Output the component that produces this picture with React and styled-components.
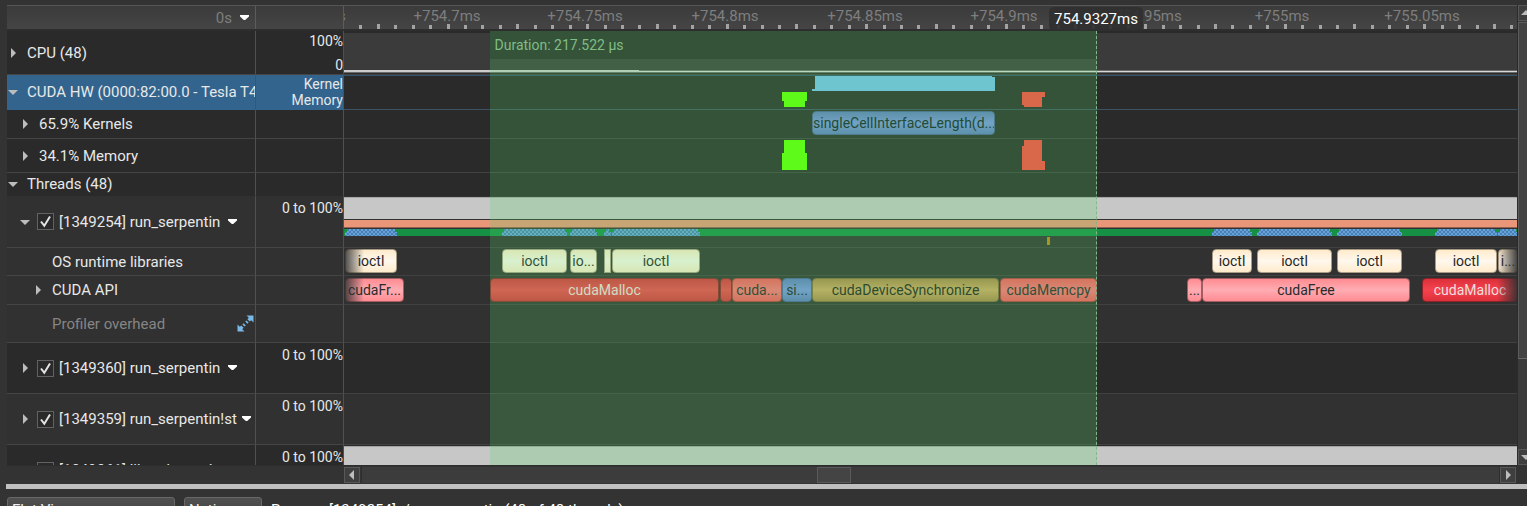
import React from "react";
import styled, { createGlobalStyle, css } from "styled-components";

const GlobalStyle = createGlobalStyle`
  * { box-sizing: border-box; }
  body {
    margin: 0;
    background: #333333;
    color: #e8e8e8;
    font: 15px/18px Roboto, "Liberation Sans", sans-serif;
    overflow: hidden;
  }
`;

/* The visible time range is divided into 1173 units. */
const RANGE = 1173;
const pct = (units) => `${(units / RANGE) * 100}%`;

const Page = styled.div`
  display: flex;
  flex-direction: column;
  height: 100vh;
  padding-top: 5px;
  overflow: hidden;
`;

const Viewer = styled.main`
  display: flex;
  flex: 1 1 0;
  min-height: 0;
  padding-left: 7px;
`;

const Sheet = styled.div`
  display: flex;
  flex-direction: column;
  flex: 1;
  min-width: 0;
`;

const Rows = styled.div`
  position: relative;
  flex: 1 1 0;
  min-height: 0;
  overflow: hidden;
`;

const columns = css`
  display: grid;
  grid-template-columns: 249px 88px minmax(0, 1fr);
`;

const Header = styled.div`
  ${columns}
  position: relative;
  height: 26px;
  background: linear-gradient(#3b3b3b, #454545);
  border-top: 1px solid #565656;
  border-bottom: 2px solid #2e2e2e;
`;

const HeaderCell = styled.div`
  display: flex;
  align-items: center;
  justify-content: flex-end;
  border-right: 1px solid #5c5c5c;
  color: #7e7e7e;
`;

const Origin = styled.button`
  display: flex;
  align-items: center;
  gap: 8px;
  padding: 0 6px 0 0;
  border: 0;
  background: none;
  color: inherit;
  font: inherit;
`;

const Ruler = styled.div`
  position: relative;
  overflow: hidden;
  color: #7e7e7e;
`;

const RulerLabel = styled.span`
  position: absolute;
  top: 1px;
  transform: translateX(-50%);
  white-space: nowrap;
`;

const Tick = styled.i`
  position: absolute;
  bottom: 0;
  width: 3px;
  height: ${(p) => (p.$major ? 5 : 4)}px;
  margin-left: -1px;
  background: #a3a3a3;
`;

const CursorLayer = styled.div`
  position: absolute;
  inset: 0 0 0 337px;
  pointer-events: none;
`;

const CursorTime = styled.output`
  position: absolute;
  top: 1px;
  transform: translateX(-50%);
  padding: 3px 5px;
  border-radius: 5px;
  background: rgba(48, 48, 48, 0.92);
  color: #ffffff;
  z-index: 3;
`;

const Row = styled.div`
  ${columns}
  height: ${(p) => p.$height}px;
  background: ${(p) => (p.$light ? "#313131" : "#2a2a2a")};
`;

const NameCell = styled.div`
  display: flex;
  align-items: center;
  padding-left: ${(p) => p.$indent || 0}px;
  overflow: hidden;
  white-space: nowrap;
  background: ${(p) => (p.$selected ? "#32648e" : "transparent")};
  border-right: 1px solid #505050;
  border-bottom: 1px solid ${(p) => (p.$line ? "#454545" : "transparent")};
  color: ${(p) => (p.$muted ? "#858585" : "#e8e8e8")};
`;

const ValueCell = styled.div`
  display: flex;
  flex-direction: column;
  justify-content: ${(p) => (p.$spread ? "space-between" : "flex-start")};
  padding-top: ${(p) => p.$top || 0}px;
  padding-bottom: ${(p) => (p.$spread ? 1 : 0)}px;
  overflow: hidden;
  text-align: right;
  font-size: 14px;
  line-height: 16px;
  background: ${(p) => (p.$selected ? "#32648e" : "transparent")};
  border-right: 1px solid #505050;
  border-bottom: 1px solid ${(p) => (p.$line ? "#454545" : "transparent")};
`;

const Track = styled.div`
  position: relative;
  overflow: hidden;
  border-top: ${(p) => (p.$selected ? "1px solid #33536c" : "0")};
  border-bottom: 1px solid ${(p) => (p.$selected ? "#3d5262" : p.$line ? "#414141" : "transparent")};
`;

const Toggle = styled.button`
  display: grid;
  place-items: center;
  flex: none;
  width: 12px;
  height: 18px;
  margin-right: ${(p) => p.$gap || 8}px;
  padding: 0;
  border: 0;
  background: none;
`;

const CheckBox = styled.span`
  display: grid;
  flex: none;
  width: 17px;
  height: 17px;
  margin-right: 5px;
  input, svg { grid-area: 1 / 1; width: 17px; height: 17px; margin: 0; }
  input { appearance: none; border: 1px solid #626262; background: #2a2a2a; }
  svg { pointer-events: none; }
`;

const PlainButton = styled.button`
  display: grid;
  place-items: center;
  width: ${(p) => p.$size}px;
  height: 18px;
  margin-left: ${(p) => p.$gap}px;
  padding: 0;
  border: 0;
  background: none;
`;

const Lane = styled.div`
  position: relative;
  height: ${(p) => p.$height}px;
  margin-top: ${(p) => p.$gap || 0}px;
`;

const UsageBar = styled(Lane)`
  background: #c7c7c7;
  border-top: 1px solid #a5a5a5;
`;

const StateBar = styled(Lane)`
  background: #ea9679;
  border-bottom: 1px solid #925f50;
`;

const ActivityBar = styled(Lane)`
  background: #169045;
`;

const Blocked = styled.i`
  position: absolute;
  top: 0;
  height: 7px;
  background: repeating-conic-gradient(#4a7fb0 0 25%, #65a3de 0 50%) 0 0 / 4px 4px;
  clip-path: polygon(2px 0, calc(100% - 2px) 0, calc(100% - 2px) 3px, 100% 3px, 100% 100%, 0 100%, 0 3px, 2px 3px);
`;

const Mark = styled.i`
  position: absolute;
  top: 0;
  height: 100%;
  z-index: 2;
  background: ${(p) => p.$color};
  clip-path: ${(p) => p.$shape || "none"};
`;

const CpuLoad = styled.div`
  height: 100%;
  padding-top: 2px;
  svg { display: block; width: 100%; height: 41px; background: #3b3b3b; }
`;

const palette = {
  ioctl: ["#ffebcb", "#fff8ee", "#a89a84", "#262626"],
  free: ["#ff8c92", "#ffacb3", "#a35d62", "#2b2b2b"],
  malloc: ["#dd303b", "#f4434e", "#8c2329", "#f2dede"],
  copy: ["#fb555c", "#ff727a", "#b53b40", "#26262a"],
  kernel: ["#5f7ac0", "#7a92e2", "#4c60a0", "#202020"],
  sync: ["#ac8549", "#d1a663", "#84693c", "#202020"],
  gpu: ["#5f7bbd", "#7a92e2", "#4c6098", "#102024"],
};

const Event = styled.div`
  position: absolute;
  top: 0;
  height: 24px;
  overflow: hidden;
  border: 1px solid ${(p) => palette[p.$kind][2]};
  border-radius: ${(p) => (p.$sliver ? 0 : 4)}px;
  background: linear-gradient(
    ${(p) => palette[p.$kind][0]},
    ${(p) => palette[p.$kind][1]} 50%,
    ${(p) => palette[p.$kind][0]}
  );
  color: ${(p) => palette[p.$kind][3]};
  font-size: 14px;
  line-height: 22px;
  text-align: center;
  white-space: nowrap;
`;

const EdgeFade = styled.i`
  position: absolute;
  top: 0;
  bottom: 0;
  width: 20px;
  ${(p) => (p.$right ? "right: 0" : "left: 0")};
  background: linear-gradient(
    ${(p) => (p.$right ? "to left" : "to right")},
    rgba(49, 49, 49, 0.9),
    rgba(49, 49, 49, 0)
  );
`;

const Overlay = styled.div`
  position: absolute;
  inset: 0 0 0 337px;
  pointer-events: none;
`;

const Selection = styled.div`
  position: absolute;
  top: 0;
  bottom: 0;
  background: rgba(89, 216, 106, 0.235);
  border-right: 1px dashed #86b58b;
  z-index: 1;
`;

const DurationLabel = styled.div`
  height: 28px;
  padding: 5px 5px 0;
  background: #355339;
  color: #7fbd86;
  font-size: 14px;
`;

const HScroll = styled.div`
  display: grid;
  grid-template-columns: 337px 17px minmax(0, 1fr) 17px;
  height: 18px;
  padding-top: 1px;
  border-top: 1px solid #2d2d2d;
  flex: none;
`;

const HGroove = styled.div`
  grid-column: 3;
  background: #3c3c3c;
  border: solid #2e2e2e;
  border-width: 0 1px;
`;

const ScrollButton = styled.button`
  display: grid;
  place-items: center;
  flex: none;
  grid-column: ${(p) => p.$column || "auto"};
  width: 16px;
  height: 16px;
  padding: 0;
  border: 1px solid #585858;
  background: #3f3f3f;
`;

const HThumb = styled.div`
  width: 3%;
  height: 16px;
  margin-left: 40%;
  background: #444444;
  border: 1px solid #5a5a5a;
`;

const VScroll = styled.div`
  display: flex;
  flex-direction: column;
  width: 10px;
  margin-bottom: 18px;
  overflow: hidden;
  border-left: 1px solid #2b2b2b;
`;

const VGroove = styled.div`
  flex: 1;
  width: 16px;
  padding-top: 1px;
  background: #3b3b3b;
`;

const VThumb = styled.div`
  height: 79%;
  background: #434343;
  border: 1px solid #5c5c5c;
  border-bottom-color: #6a6a6a;
`;

const Splitter = styled.hr`
  flex: none;
  align-self: stretch;
  height: 5px;
  margin: 1px 0 0 6px;
  border: 0;
  background: #c0c0c0;
`;

const BottomPanel = styled.footer`
  display: flex;
  align-items: flex-start;
  gap: 9px;
  flex: none;
  height: 17px;
  padding: 8px 7px 0;
  overflow: hidden;
`;

const BottomSelect = styled.select`
  appearance: none;
  width: ${(p) => p.$width}px;
  height: 26px;
  padding: 0 4px;
  border: 1px solid #686868;
  border-radius: 3px;
  background: linear-gradient(#505050, #404040);
  color: #f0f0f0;
  font: inherit;
`;

const BottomText = styled.span`
  padding-top: 4px;
  color: #ffffff;
`;

const Arrow = ({ dir, fill = "#bdbdbd", size = 10 }) => {
  const d = {
    right: "M3 0L8 5L3 10Z",
    left: "M7 0L2 5L7 10Z",
    down: "M0 3H10L5 8Z",
    up: "M0 7H10L5 2Z",
  }[dir];
  return (
    <svg width={size} height={size} viewBox="0 0 10 10" aria-hidden="true">
      <path d={d} fill={fill} />
    </svg>
  );
};

const MenuArrow = () => (
  <svg width="9" height="6" viewBox="0 0 9 6" aria-hidden="true">
    <path d="M0 0H9V1.5L5.2 5H3.8L0 1.5Z" fill="#ffffff" />
  </svg>
);

const Expand = () => (
  <svg width="17" height="17" viewBox="0 0 17 17" fill="#7ab8e6" aria-hidden="true">
    <path d="M9.5 0.5H16.5V7.5L14.2 5.2L12.8 6.6L10.4 4.2L11.8 2.8Z" />
    <path d="M9.4 5.4L11.6 7.6L10.4 8.8L8.2 6.6Z" />
    <path d="M0.5 9.5L2.8 11.8L4.2 10.4L6.6 12.8L5.2 14.2L7.5 16.5H0.5Z" />
    <path d="M5.4 9.4L6.6 8.2L8.8 10.4L7.6 11.6Z" />
  </svg>
);

const Check = ({ label }) => (
  <CheckBox>
    <input type="checkbox" defaultChecked aria-label={label} />
    <svg viewBox="0 0 17 17" aria-hidden="true">
      <path d="M4 8.5L7.3 12.8L13 3.5" fill="none" stroke="#e4e4e4" strokeWidth="2" />
    </svg>
  </CheckBox>
);

const at = (start, end) => ({ left: pct(start), width: pct(end - start) });

const rulerLabels = [
  [-36, "+754.65ms"],
  [103, "+754.7ms"],
  [241, "+754.75ms"],
  [381, "+754.8ms"],
  [521, "+754.85ms"],
  [660, "+754.9ms"],
  [800, "+754.95ms"],
  [938, "+755ms"],
  [1078, "+755.05ms"],
];
const ticks = Array.from({ length: 67 }, (_, i) => ({
  pos: 16.4 + i * 17.44,
  major: i % 4 === 1,
}));

const osEvents = [
  [1, 53, "ioctl"],
  [158, 223, "ioctl"],
  [226, 253, "io..."],
  [260, 267, ""],
  [268, 356, "ioctl"],
  [868, 908, "ioctl"],
  [913, 988, "ioctl"],
  [993, 1058, "ioctl"],
  [1091, 1153, "ioctl"],
  [1154, 1174, "i..."],
];

const apiEvents = [
  [1, 60, "cudaFr...", "free"],
  [146, 375, "cudaMalloc", "malloc"],
  [376, 388, "", "malloc"],
  [388, 438, "cuda...", "copy"],
  [438, 468, "si...", "kernel"],
  [468, 655, "cudaDeviceSynchronize", "sync"],
  [656, 753, "cudaMemcpy", "copy"],
  [843, 858, "...", "free"],
  [858, 1066, "cudaFree", "free"],
  [1078, 1174, "cudaMalloc", "malloc"],
];

const CYAN = "#6ec4cf";
const GREEN = "#5efa1a";
const RED = "#d9674a";

function ThreadName({ id, name, open }) {
  return (
    <NameCell $indent={12} $line>
      <Toggle aria-label={`Toggle ${id}`} $gap={6}>
        <Arrow dir={open ? "down" : "right"} />
      </Toggle>
      <Check label={`[${id}] ${name}`} />
      <span>{`[${id}] ${name}`}</span>
      <PlainButton $size={9} $gap={name.includes("!") ? 5 : 8} aria-label="Thread menu">
        <MenuArrow />
      </PlainButton>
    </NameCell>
  );
}

export default function App() {
  return (
    <>
      <GlobalStyle />
      <Page>
        <Viewer>
          <Sheet>
            <Header>
              <HeaderCell>
                <Origin>
                  0s <MenuArrow />
                </Origin>
              </HeaderCell>
              <HeaderCell />
              <Ruler>
                {rulerLabels.map(([pos, text]) => (
                  <RulerLabel key={text} style={{ left: pct(pos) }}>{text}</RulerLabel>
                ))}
                {ticks.map((t) => (
                  <Tick key={t.pos} $major={t.major} style={{ left: pct(t.pos) }} />
                ))}
              </Ruler>
              <CursorLayer>
                <CursorTime style={{ left: pct(752) }}>754.9327ms</CursorTime>
              </CursorLayer>
            </Header>

            <Rows>
              <Row $height={44}>
                <NameCell $line>
                  <Toggle aria-label="Toggle CPU"><Arrow dir="right" /></Toggle>
                  CPU (48)
                </NameCell>
                <ValueCell $spread $line $top={2}>
                  <span>100%</span>
                  <span>0</span>
                </ValueCell>
                <Track $line>
                  <CpuLoad>
                    <svg viewBox={`0 0 ${RANGE} 41`} preserveAspectRatio="none" role="img" aria-label="CPU load">
                      <rect y="40" width={RANGE} height="1" fill="#2c2c2c" />
                      <rect y="37" width={RANGE} height="1" fill="#6a6a6a" />
                      <rect y="38" width={RANGE} height="1" fill="#d8d8d8" />
                      <rect y="39" width={RANGE} height="1" fill="#6a6a6a" />
                      <rect y="37" width="295" height="2" fill="#cccccc" />
                    </svg>
                  </CpuLoad>
                </Track>
              </Row>

              <Row $height={35}>
                <NameCell $selected>
                  <Toggle aria-label="Toggle CUDA HW"><Arrow dir="down" /></Toggle>
                  CUDA HW (0000:82:00.0 - Tesla T4)
                </NameCell>
                <ValueCell $selected $top={1}>
                  <span>Kernel</span>
                  <span>Memory</span>
                </ValueCell>
                <Track $selected>
                  <Lane $height={15}>
                    <Mark
                      style={at(468, 651)}
                      $color={CYAN}
                      $shape="polygon(3px 0, calc(100% - 3px) 0, calc(100% - 3px) 1px, 100% 1px, 100% 100%, 0 100%, 0 13px, 3px 13px)"
                    />
                  </Lane>
                  <Lane $height={15} $gap={1}>
                    <Mark
                      style={at(438, 463)}
                      $color={GREEN}
                      $shape="polygon(0 0, 100% 0, 100% 9px, calc(100% - 2px) 9px, calc(100% - 2px) 100%, 2px 100%, 2px 9px, 0 9px)"
                    />
                    <Mark
                      style={at(678, 701)}
                      $color={RED}
                      $shape="polygon(0 0, 100% 0, 100% 5px, calc(100% - 3px) 5px, calc(100% - 3px) 100%, 2px 100%, 2px 13px, 0 13px)"
                    />
                  </Lane>
                </Track>
              </Row>

              <Row $height={29}>
                <NameCell $indent={12} $line>
                  <Toggle aria-label="Toggle kernels"><Arrow dir="right" /></Toggle>
                  65.9% Kernels
                </NameCell>
                <ValueCell $line />
                <Track $line>
                  <Lane $height={24} $gap={1}>
                    <Event $kind="gpu" style={at(468, 651)}>singleCellInterfaceLength(d...</Event>
                  </Lane>
                </Track>
              </Row>

              <Row $height={34}>
                <NameCell $indent={12} $line>
                  <Toggle aria-label="Toggle memory"><Arrow dir="right" /></Toggle>
                  34.1% Memory
                </NameCell>
                <ValueCell $line />
                <Track $line>
                  <Lane $height={30} $gap={1}>
                    <Mark
                      style={at(438, 463)}
                      $color={GREEN}
                      $shape="polygon(2px 0, calc(100% - 2px) 0, calc(100% - 2px) 13px, 100% 13px, 100% 100%, 0 100%, 0 13px, 2px 13px)"
                    />
                    <Mark
                      style={at(678, 701)}
                      $color={RED}
                      $shape="polygon(2px 0, calc(100% - 3px) 0, calc(100% - 3px) 21px, 100% 21px, 100% 100%, 0 100%, 0 6px, 2px 6px)"
                    />
                  </Lane>
                </Track>
              </Row>

              <Row $height={23}>
                <NameCell>
                  <Toggle aria-label="Toggle threads"><Arrow dir="down" /></Toggle>
                  Threads (48)
                </NameCell>
                <ValueCell />
                <Track />
              </Row>

              <Row $height={52} $light>
                <ThreadName id="1349254" name="run_serpentin" open />
                <ValueCell $line $top={4}>0 to 100%</ValueCell>
                <Track $line>
                  <UsageBar $height={22} $gap={1} />
                  <StateBar $height={8} $gap={1} />
                  <ActivityBar $height={7} $gap={1}>
                    {osEvents.map(([s, e]) => (
                      <Blocked key={s} style={at(s, e)} />
                    ))}
                  </ActivityBar>
                  <Lane $height={8} $gap={1}>
                    <Mark style={at(703, 706)} $color="#a6981c" />
                  </Lane>
                </Track>
              </Row>

              <Row $height={28} $light>
                <NameCell $indent={45} $line>OS runtime libraries</NameCell>
                <ValueCell $line />
                <Track $line>
                  <Lane $height={24} $gap={1}>
                    {osEvents.map(([s, e, text]) => (
                      <Event key={s} $kind="ioctl" $sliver={!text} style={at(s, e)}>{text}</Event>
                    ))}
                  </Lane>
                  <EdgeFade />
                  <EdgeFade $right />
                </Track>
              </Row>

              <Row $height={29} $light>
                <NameCell $indent={25} $line>
                  <Toggle aria-label="Toggle CUDA API"><Arrow dir="right" /></Toggle>
                  CUDA API
                </NameCell>
                <ValueCell $line />
                <Track $line>
                  <Lane $height={24} $gap={2}>
                    {apiEvents.map(([s, e, text, kind]) => (
                      <Event key={s} $kind={kind} style={at(s, e)}>{text}</Event>
                    ))}
                  </Lane>
                  <EdgeFade />
                  <EdgeFade $right />
                </Track>
              </Row>

              <Row $height={38} $light>
                <NameCell $indent={45} $muted $line>
                  Profiler overhead
                  <PlainButton $size={17} $gap={72} aria-label="Expand row"><Expand /></PlainButton>
                </NameCell>
                <ValueCell $line />
                <Track $line />
              </Row>

              <Row $height={51}>
                <ThreadName id="1349360" name="run_serpentin" />
                <ValueCell $line $top={4}>0 to 100%</ValueCell>
                <Track $line />
              </Row>

              <Row $height={51} $light>
                <ThreadName id="1349359" name="run_serpentin!st" />
                <ValueCell $line $top={4}>0 to 100%</ValueCell>
                <Track $line />
              </Row>

              <Row $height={51}>
                <ThreadName id="1349361" name="libcudart.so!st" />
                <ValueCell $line $top={4}>0 to 100%</ValueCell>
                <Track $line>
                  <UsageBar $height={22} $gap={1} />
                </Track>
              </Row>

              <Overlay>
                <Selection style={at(145.5, 752.5)}>
                  <DurationLabel>Duration: 217.522 µs</DurationLabel>
                </Selection>
              </Overlay>
            </Rows>

            <HScroll>
              <ScrollButton $column={2} aria-label="Scroll left"><Arrow dir="left" /></ScrollButton>
              <HGroove>
                <HThumb />
              </HGroove>
              <ScrollButton $column={4} aria-label="Scroll right"><Arrow dir="right" /></ScrollButton>
            </HScroll>
          </Sheet>

          <VScroll>
            <ScrollButton aria-label="Scroll up"><Arrow dir="up" /></ScrollButton>
            <VGroove><VThumb /></VGroove>
            <ScrollButton aria-label="Scroll down"><Arrow dir="down" /></ScrollButton>
          </VScroll>
        </Viewer>

        <Splitter />
        <BottomPanel>
          <BottomSelect $width={168} aria-label="View"><option>Flat View</option></BottomSelect>
          <BottomSelect $width={78} aria-label="Filter"><option>Native</option></BottomSelect>
          <BottomText>Process [1349254] ./run_serpentin (48 of 48 threads)</BottomText>
        </BottomPanel>
      </Page>
    </>
  );
}
